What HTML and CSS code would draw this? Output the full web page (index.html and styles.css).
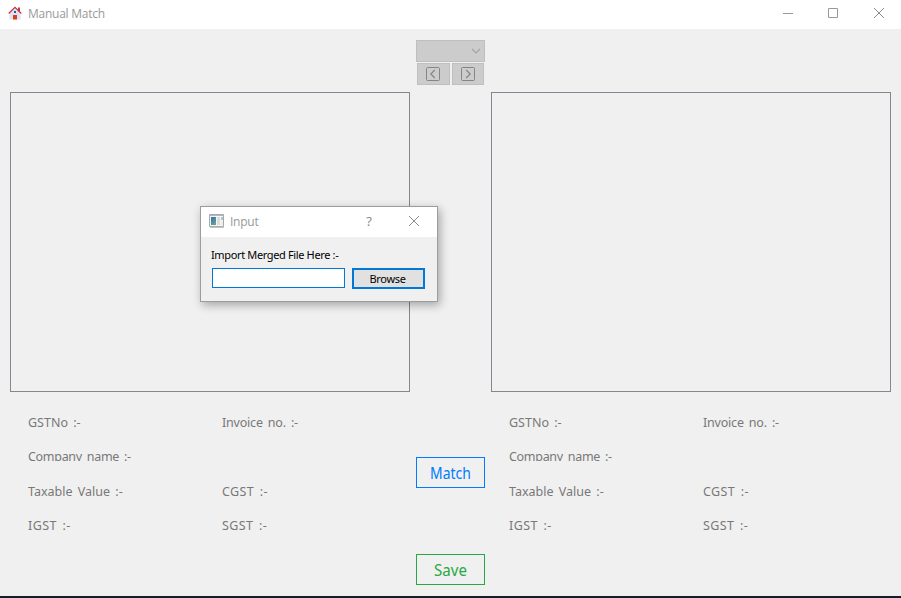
FILE: index.html
```html
<!DOCTYPE html>
<html lang="en">
<head>
<meta charset="utf-8">
<title>Manual Match</title>
<link rel="stylesheet" href="styles.css">
</head>
<body>
<div class="window">
  <header class="titlebar">
    <svg class="home-icon" width="14" height="14" viewBox="0 0 14 14">
      <path d="M1.500 8L7 2l5.500 6v5.500h-11z" fill="#dde2f6"/>
      <path d="M10 1.500h2v4h-2z" fill="#c0404a"/>
      <path d="M.7 7.500L7 1.300l6.300 6.200" fill="none" stroke="#c4303a" stroke-width="1.200"/>
      <path d="M6 5h2v2H6z" fill="#1560a8"/>
      <path d="M5 9h4v4.500H5z" fill="#d9420f"/>
    </svg>
    <span class="title">Manual Match</span>
    <div class="controls">
      <svg width="46" height="28"><path d="M10 13.500h10" stroke="#999"/></svg>
      <svg width="46" height="28"><path d="M9.500 8.500h9v9h-9z" fill="none" stroke="#999"/></svg>
      <svg width="46" height="28"><path d="M9 8l10 10M19 8L9 18" stroke="#8c8c8c"/></svg>
    </div>
  </header>
  <main class="content">
    <section class="side">
      <div class="list"></div>
      <div class="fields">
        <span class="gst">GSTNo :-</span><span class="invoice">Invoice no. :-</span>
        <span class="company">Company name :-</span><span></span>
        <span class="taxable">Taxable Value :-</span><span class="tax">CGST :-</span>
        <span class="tax">IGST :-</span><span class="tax">SGST :-</span>
      </div>
    </section>
    <section class="middle">
      <div class="combo"><svg width="10" height="6"><path d="M1 1l4 4 4-4" fill="none" stroke="#a3a3a3" stroke-width="1.200"/></svg></div>
      <div class="nav">
        <button class="step prev"><svg width="14" height="14"><rect x=".5" y=".5" width="13" height="13" rx="1" fill="none" stroke="#858585"/><path d="M8.800 3L4.800 7l4 4" fill="none" stroke="#858585" stroke-width="1.200"/></svg></button>
        <button class="step next"><svg width="14" height="14"><rect x=".5" y=".5" width="13" height="13" rx="1" fill="none" stroke="#858585"/><path d="M5.200 3l4 4-4 4" fill="none" stroke="#858585" stroke-width="1.200"/></svg></button>
      </div>
      <button class="action match"><span>Match</span></button>
      <button class="action save"><span>Save</span></button>
    </section>
    <section class="side">
      <div class="list"></div>
      <div class="fields">
        <span class="gst">GSTNo :-</span><span class="invoice">Invoice no. :-</span>
        <span class="company">Company name :-</span><span></span>
        <span class="taxable">Taxable Value :-</span><span class="tax">CGST :-</span>
        <span class="tax">IGST :-</span><span class="tax">SGST :-</span>
      </div>
    </section>
  </main>
  <div class="dialog">
    <div class="dialog-bar">
      <svg width="15" height="14" viewBox="0 0 15 14">
        <path d="M.5 .5h14v12H.5z" fill="#f6f6f6" stroke="#a5a9b0"/>
        <path d="M1 1.500h13" stroke="#b4b8be"/>
        <path d="M1 13.500h14" stroke="#c6c6c6"/>
        <path d="M2 3h5v8H2z" fill="#4f8da0"/><path d="M2 3h5L2 8z" fill="#4777a8"/><path d="M2 11l5-4v4z" fill="#5fa583"/>
        <path d="M8 3h3v8H8z" fill="#dcdcdc"/><path d="M12 3h2v3h-2z" fill="#a5cbbd"/><path d="M12 7h2v4h-2z" fill="#ececec"/>
      </svg>
      <span class="dialog-title">Input</span>
      <span class="help">?</span>
      <svg class="close" width="12" height="12"><path d="M1 1l10 10M11 1L1 11" stroke="#8c8c8c"/></svg>
    </div>
    <div class="dialog-body">
      <label class="prompt" for="file">Import Merged File Here :-</label>
      <div class="file-row">
        <input id="file" class="file" type="text">
        <button class="browse">Browse</button>
      </div>
    </div>
  </div>
</div>
</body>
</html>
```
FILE: styles.css
```css
* { box-sizing: border-box; }
body { margin: 0; font-family: "Noto Sans", sans-serif; }
svg { display: block; flex: none; }
button { padding: 0; margin: 0; font-family: inherit; border-radius: 0; }
.window {
  position: relative;
  width: 901px;
  height: 598px;
  display: flex;
  flex-direction: column;
  overflow: hidden;
  background: #f0f0f0;
  border-bottom: 2px solid #171b2b;
}
.titlebar {
  height: 29px;
  flex: none;
  display: flex;
  align-items: flex-start;
  background: #fff;
  padding-left: 8px;
}
.home-icon { margin-top: 6px; }
.title, .dialog-title {
  font-family: "Open Sans", sans-serif;
  font-size: 12px;
  line-height: 16px;
  letter-spacing: -.25px;
  color: #999;
  white-space: nowrap;
}
.title { margin: 6px 0 0 6px; }
.controls { display: flex; margin-left: auto; margin-right: -10px; }
.content {
  flex: 1;
  display: grid;
  grid-template-columns: 400px 69px 400px;
  justify-content: space-between;
  padding: 0 10px;
}
.side { padding-top: 63px; }
.list { height: 300px; border: 1px solid #828790; }
.fields {
  display: grid;
  grid-template-columns: 194px 1fr;
  grid-template-rows: 34px 35px 34px 34px;
  padding: 21px 0 0 18px;
  font-size: 12.500px;
  line-height: 19px;
  color: #787878;
  white-space: nowrap;
}
.fields span { justify-self: start; }
.gst { word-spacing: 2px; }
.invoice { letter-spacing: -.2px; word-spacing: 2px; }
.company { height: 14px; overflow: hidden; letter-spacing: -.3px; word-spacing: 2px; }
.taxable { word-spacing: 2px; }
.tax { letter-spacing: .4px; word-spacing: 2px; }
.middle { padding-top: 11px; }
.combo {
  height: 22px;
  display: flex;
  align-items: center;
  justify-content: flex-end;
  padding-right: 3px;
  background: #ccc;
  border: 1px solid #bfbfbf;
}
.nav { display: flex; gap: 2px; margin: 1px 1px 0; }
.step {
  width: 33px;
  height: 22px;
  display: flex;
  align-items: center;
  justify-content: center;
  background: #ccc;
  border: 1px solid #bfbfbf;
}
.prev { padding-right: 1px; }
.next { width: 32px; }
.action {
  display: block;
  width: 69px;
  height: 31px;
  background: transparent;
  font-size: 16px;
  line-height: 29px;
}
.action span { display: block; padding-top: 1px; line-height: 28px; transform: scaleX(.87); }
.save span { transform: scaleX(.94); }
.match { margin-top: 372px; color: #007bff; border: 1px solid #007bff; }
.save { margin-top: 66px; color: #28a745; border: 1px solid #28a745; }
.dialog {
  position: absolute;
  left: 200px;
  top: 206px;
  width: 238px;
  height: 96px;
  background: #f0f0f0;
  border: 1px solid #9c9c9c;
  box-shadow: 2px 3px 9px rgba(0, 0, 0, .32);
}
.dialog-bar {
  height: 30px;
  display: flex;
  align-items: center;
  background: #fff;
  padding: 0 17px 2px 8px;
}
.dialog-title { margin: 2px 0 0 6px; }
.help { margin-left: auto; margin-right: 36px; font-size: 13px; line-height: 16px; color: #8c8c8c; }
.dialog-body { padding: 9px 12px 0 11px; }
.prompt { display: block; margin-left: -1px; font-size: 11px; line-height: 18px; letter-spacing: -.36px; color: #000; white-space: nowrap; }
.file-row { display: flex; justify-content: space-between; align-items: flex-start; margin-top: 4px; }
.file { width: 133px; height: 20px; padding: 0 3px; border: 1px solid #0078d7; background: #fff; outline: 0; }
.browse { width: 73px; height: 21px; padding-right: 2px; border: 2px solid #0078d7; background: #e1e1e1; font-size: 11px; line-height: 17px; letter-spacing: -.3px; color: #000; }
```
